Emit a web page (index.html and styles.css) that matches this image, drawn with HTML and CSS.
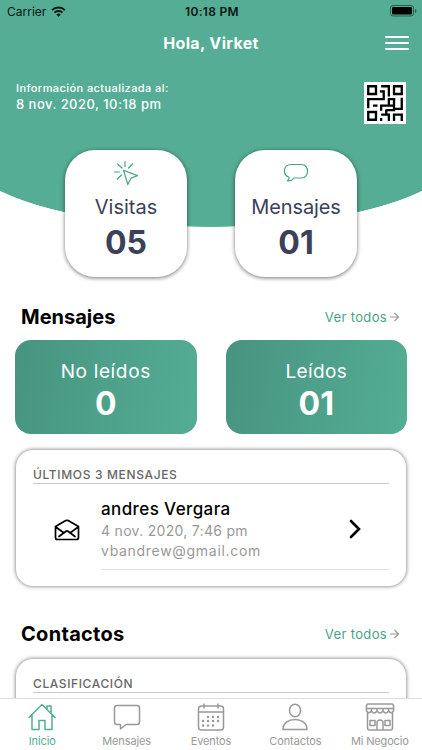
FILE: index.html
```
<!DOCTYPE html>
<html lang="es">
<head>
<meta charset="utf-8">
<title>Inicio</title>
<link rel="stylesheet" href="styles.css">
</head>
<body>
<div class="screen">

<header class="hero">
  <div class="status">
    <div class="carrier"><span>Carrier</span>
      <svg width="15" height="11" viewBox="0 0 15 11" fill="none" stroke="#0b1512" stroke-width="2"><path d="M1 4.1a9.3 9.3 0 0 1 13 0M3.5 6.6a5.7 5.7 0 0 1 8 0"/><path d="M5.3 8.5a3.2 3.2 0 0 1 4.4 0l-2.2 2.3z" fill="#0b1512" stroke="none"/></svg>
    </div>
    <b class="clock">10:18 PM</b>
    <svg class="battery" width="27" height="12" viewBox="0 0 27 12"><rect x=".5" y=".5" width="23" height="10.5" rx="2.5" fill="none" stroke="#30594c"/><rect x="2" y="2" width="20" height="7.5" rx="1.2"/><path d="M25 4v4q1.5-.6 1.5-2T25 4z" fill="#30594c"/></svg>
  </div>

  <div class="topbar">
    <h1>Hola, Virket</h1>
    <svg class="burger" width="24" height="16" viewBox="0 0 24 16" stroke="#fff" stroke-width="2" stroke-linecap="round"><path d="M1 2h22M1 8h22M1 14h22"/></svg>
  </div>

  <div class="info">
    <div>
      <p class="updated">Información actualizada al:</p>
      <p class="date">8 nov. 2020, 10:18 pm</p>
    </div>
    <svg class="qr" width="42" height="42" viewBox="-1.15 -1.15 16.3 16.3" fill="none" stroke="#000">
      <path d="M-1.15-1.15h16.3v16.3h-16.3z" fill="#fff" stroke="none"/>
      <path d="M.5.5h3v3h-3zM10.5.5h3v3h-3zM.5 10.5h3v3h-3z"/>
      <path d="M5.500.5h3v4M5 2.500h1.500v3h-6V9M2.300 8h1.800M11 5.500H8.500V8H5.500v2M10.500 5.500V8h-2M10.500 8v1.800h-3M13.500 5v4.300H10.500M5.500 11.500h3V14M5.500 12.800V14M7.500 9.500v2M10.500 14v-2.500h3V14"/>
    </svg>
  </div>

  <div class="stats">
    <div class="stat">
      <svg width="28" height="28" viewBox="0 0 28 28" fill="none" stroke="#45a588" stroke-width="1.200" stroke-linecap="round" stroke-linejoin="round"><path d="M11.500 11.300l14 5.300-6.500 2.600-3.200 6.300zM13 2.500v5M20.500 5L16.500 9M5.500 5l4.500 4M2.500 13H8M9.500 16l-4.200 4"/></svg>
      <span class="label visits">Visitas</span>
      <strong>05</strong>
    </div>
    <div class="stat">
      <svg width="28" height="28" viewBox="0 0 28 28" fill="none" stroke="#45a588" stroke-width="1.200" stroke-linejoin="round"><path d="M9 5.500h10.500c8 0 8 13.500 0 13.500h-7.500c-1.500 2-3.800 3.200-6.500 2.800 1.200-1 1.700-2.200 1.500-3.500C.5 16 .8 5.500 9 5.500z"/></svg>
      <span class="label">Mensajes</span>
      <strong>01</strong>
    </div>
  </div>
</header>

<main>
  <div class="heading">
    <h2>Mensajes</h2>
    <a class="more">Ver todos<svg width="11" height="10" viewBox="0 0 11 10" fill="none" stroke="#999" stroke-width="1.200"><path d="M1 5h8.500M5.500 1l4 4-4 4"/></svg></a>
  </div>
  <div class="counts">
    <div class="count"><span class="unread">No leídos</span><strong>0</strong></div>
    <div class="count"><span>Leídos</span><strong>01</strong></div>
  </div>
  <section class="panel">
    <h3 class="last">ÚLTIMOS 3 MENSAJES</h3>
    <div class="message">
      <svg class="mail" width="26" height="22" viewBox="0 0 26 22" fill="none" stroke="#000" stroke-width="1.700" stroke-linejoin="round" stroke-linecap="round"><path d="M1.500 7.500L11.800 1.600q1.200-.6 2.400 0L24.500 7.500v11q0 2-2 2h-19q-2 0-2-2zM1.800 8l8.200 6M24.200 8L16 14M5 17.500l7-5.200q1-.7 2 0l7 5.200"/></svg>
      <div class="message-body">
        <div>
          <p class="name">andres Vergara</p>
          <p class="when">4 nov. 2020, 7:46 pm</p>
          <p class="when mailto">vbandrew@gmail.com</p>
        </div>
        <svg class="chevron" width="12" height="20" viewBox="0 0 12 20" fill="none" stroke="#000" stroke-width="2.600" stroke-linecap="round"><path d="M2 2l8 8-8 8"/></svg>
      </div>
    </div>
  </section>

  <div class="heading second">
    <h2 class="contacts">Contactos</h2>
    <a class="more">Ver todos<svg width="11" height="10" viewBox="0 0 11 10" fill="none" stroke="#999" stroke-width="1.200"><path d="M1 5h8.500M5.500 1l4 4-4 4"/></svg></a>
  </div>
  <section class="panel classes">
    <h3>CLASIFICACIÓN</h3>
  </section>
</main>

<nav class="tabs">
  <a class="tab active">
    <svg width="30" height="30" viewBox="0 0 30 30"><path d="M2 15.500L15 2.500l13 13M5 13v14.500h7v-9h6v9h7V13M20 7V4h4v7.500"/></svg>
    <span>Inicio</span>
  </a>
  <a class="tab">
    <svg width="30" height="30" viewBox="0 0 30 30"><path d="M5 3.500h20q2.500 0 2.500 2.500v14q0 2.500-2.500 2.500H14L8.500 27v-4.500H5q-2.500 0-2.500-2.500V6q0-2.500 2.500-2.500z"/></svg>
    <span>Mensajes</span>
  </a>
  <a class="tab">
    <svg width="30" height="30" viewBox="0 0 30 30"><rect x="2.500" y="4" width="25" height="24" rx="3"/><path d="M2.500 10h25M8 2v4M22 2v4"/><path class="dots" d="M12 15h.1M17 15h.1M22 15h.1M7 19h.1M12 19h.1M17 19h.1M22 19h.1M7 23.500h.1M12 23.500h.1M17 23.500h.1"/></svg>
    <span>Eventos</span>
  </a>
  <a class="tab">
    <svg width="30" height="30" viewBox="0 0 30 30"><ellipse cx="15" cy="8.500" rx="5.500" ry="6.300"/><path d="M3 27.500c0-13.500 24-13.500 24 0z"/></svg>
    <span>Contactos</span>
  </a>
  <a class="tab">
    <svg width="30" height="30" viewBox="0 0 30 30"><path d="M3 2h24q1.500 0 1.500 2v5q-2.500 3.500-5 0-2.700 4-5.500 0-3 4-6 0-2.800 4-5.500 0-2.500 3.500-5 0V4Q1.500 2 3 2zM1.500 6.500h27M6.500 6.500V9M12 6.500V9M18 6.500V9M23.500 6.500V9M2.500 10.500V26q0 2 2 2h21q2 0 2-2V10.500M12 28v-7q0-3 3-3t3 3v7M5 18.500h5v5H5zM20 18.500h5v5h-5z"/></svg>
    <span class="business">Mi Negocio</span>
  </a>
</nav>

</div>
</body>
</html>
```

FILE: styles.css
```
* {
  box-sizing: border-box;
}

body, h1, h2, h3, p {
  margin: 0;
}

body {
  font-family: Inter, "Open Sans", sans-serif;
  background: #fff;
  color: #000;
}

svg {
  display: block;
  flex: none;
}

.screen {
  display: flex;
  flex-direction: column;
  height: 750px;
  overflow: hidden;
}

/* green block ending in a curve behind the two cards */
.hero {
  height: 290px;
  flex: none;
  color: #fff;
  background:
    linear-gradient(#54ad94, #54ad94) 0 0 / 100% 151px no-repeat,
    radial-gradient(ellipse 250px 77px at 50% 150px, #54ad94 99.3%, #fff 100%);
}

.status {
  display: grid;
  grid-template-columns: 1fr auto 1fr;
  align-items: center;
  height: 22px;
  padding: 0 5px 0 7px;
  color: #0b1512;
  font-size: 12px;
}

.carrier {
  display: flex;
  align-items: center;
  gap: 5px;
}

.clock {
  font-weight: 600;
  letter-spacing: .3px;
}

.battery {
  justify-self: end;
}

.topbar {
  display: grid;
  grid-template-columns: 1fr auto 1fr;
  align-items: center;
  height: 42px;
  padding: 0 13px;
}

.topbar h1 {
  grid-column: 2;
  font-size: 16px;
  font-weight: 700;
  letter-spacing: .35px;
}

.burger {
  justify-self: end;
}

.info {
  display: flex;
  justify-content: space-between;
  padding: 18px 16px 0;
  height: 86px;
}

.updated {
  font-size: 11px;
  line-height: 13px;
  font-weight: 500;
  letter-spacing: .42px;
}

.date {
  margin-top: 1px;
  font-size: 13px;
  line-height: 17px;
  font-weight: 500;
  letter-spacing: .48px;
}

.qr {
  stroke-width: .9;
}

.stats {
  display: flex;
  justify-content: center;
  gap: 48px;
}

.stat {
  display: flex;
  flex-direction: column;
  align-items: center;
  width: 122px;
  height: 127px;
  padding-top: 9px;
  border-radius: 30px;
  background: #fff;
  box-shadow: 0 1px 4px rgba(0, 0, 0, .55);
  color: #3b4158;
}

.label {
  margin-top: 8px;
  font-size: 20px;
  line-height: 25px;
  letter-spacing: -.1px;
}

.visits {
  letter-spacing: 0;
}

.stat strong {
  margin-top: 3px;
  font-size: 32px;
  line-height: 40px;
}

main {
  flex: 1;
  min-height: 0;
  overflow: hidden;
}

.heading {
  display: flex;
  justify-content: space-between;
  align-items: center;
  height: 50px;
  padding: 4px 22px 0 21px;
}

.heading h2 {
  font-size: 20px;
  font-weight: 700;
}

.heading .contacts {
  letter-spacing: .3px;
}

.more {
  display: flex;
  align-items: center;
  gap: 2px;
  color: #45a588;
  font-size: 13px;
  letter-spacing: .35px;
}

.counts {
  display: flex;
  gap: 29px;
  padding: 0 15px;
}

.count {
  display: flex;
  flex: 1;
  flex-direction: column;
  align-items: center;
  height: 94px;
  padding-top: 19px;
  border-radius: 16px;
  background: linear-gradient(100deg, #479480, #54ad94);
  color: #fff;
}

.count span {
  font-size: 19px;
  line-height: 26px;
  letter-spacing: .35px;
}

.count .unread {
  letter-spacing: .65px;
}

.count strong {
  font-size: 32px;
  line-height: 38px;
}

.panel {
  height: 136px;
  margin: 16px 16px 0;
  padding: 16px 17px 0;
  border-radius: 17px;
  background: #fff;
  box-shadow: 0 0 4px rgba(0, 0, 0, .6);
}

.panel h3 {
  height: 18px;
  border-bottom: 1px solid #c9c9c9;
  color: #666;
  font-size: 12px;
  line-height: 18px;
  font-weight: 500;
  letter-spacing: .6px;
}

.panel .last {
  letter-spacing: .65px;
}

.message {
  display: flex;
}

.mail {
  margin: 35px 21px 0;
}

.message-body {
  display: flex;
  flex: 1;
  justify-content: space-between;
  height: 86px;
  padding-top: 13px;
  border-bottom: 1px solid #e2e2e2;
}

.name {
  font-size: 17px;
  line-height: 24px;
  font-weight: 500;
  letter-spacing: .4px;
}

.when {
  color: #999;
  font-size: 14px;
  line-height: 20px;
  letter-spacing: .3px;
}

.mailto {
  letter-spacing: .7px;
}

.chevron {
  margin: 22px 28px 0 0;
}

.second {
  height: 56px;
  margin-top: 16px;
  padding-top: 8px;
}

.classes {
  margin-top: 1px;
}

.tabs {
  display: grid;
  grid-template-columns: repeat(5, 1fr);
  flex: none;
  height: 52px;
  border-top: 1px solid #ddd;
  background: #fff;
}

.tab {
  display: flex;
  flex-direction: column;
  align-items: center;
  padding-top: 3px;
  color: #999;
  font-size: 11px;
  line-height: 18px;
  letter-spacing: -.1px;
}

.business {
  white-space: nowrap;
  letter-spacing: -.15px;
}

.tab svg {
  fill: none;
  stroke: currentColor;
  stroke-width: 1.5;
  stroke-linecap: round;
  stroke-linejoin: round;
}

.tab .dots {
  stroke-width: 2.4;
}

.active {
  color: #54ad94;
}
```
